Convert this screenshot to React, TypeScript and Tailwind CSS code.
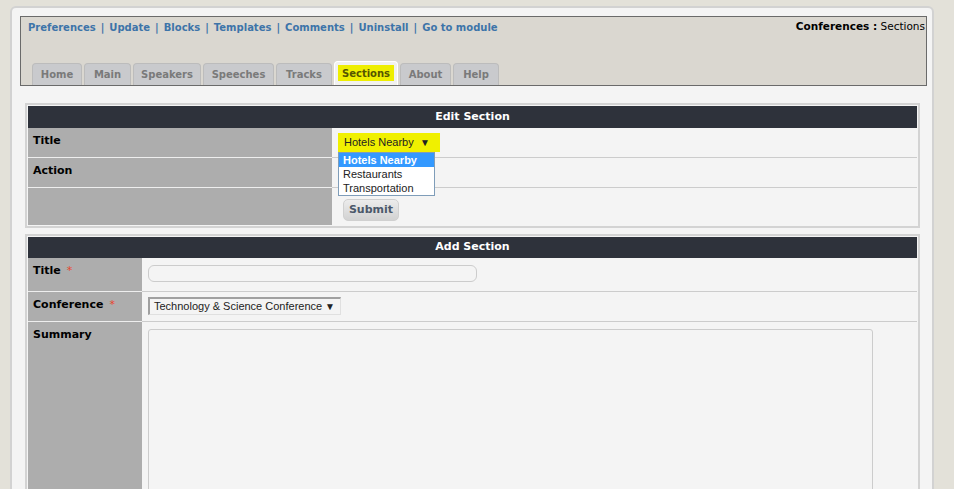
import React from 'react';

const verdana = { fontFamily: '"DejaVu Sans", Verdana, sans-serif' };
const arial = { fontFamily: '"Liberation Sans", Arial, sans-serif' };

const links = ['Preferences', 'Update', 'Blocks', 'Templates', 'Comments', 'Uninstall', 'Go to module'];

const tabs = [
  { label: 'Home', w: 'w-[50px]' },
  { label: 'Main', w: 'w-[47px]' },
  { label: 'Speakers', w: 'w-[68px]' },
  { label: 'Speeches', w: 'w-[71px]' },
  { label: 'Tracks', w: 'w-[56px]' },
  { label: 'Sections', w: 'w-[64px]', active: true },
  { label: 'About', w: 'w-[51px]' },
  { label: 'Help', w: 'w-[46px]' },
];

function Req() {
  return <span className="text-[#e8442c] font-normal ml-[6px]">*</span>;
}

export default function App() {
  return (
    <div className="h-screen bg-[#e3e1d9] pl-[10px] pt-[6px] overflow-hidden" style={verdana}>
      <div className="w-[924px] min-h-[500px] bg-[#f4f4f4] border-2 border-[#d2d2d2] rounded-t-[6px] pt-[8px] pl-[8px] pr-[5px]">
        {/* module header */}
        <div className="h-[70px] border border-[#6a6a6a] bg-[#dad7d0] flex flex-col justify-between">
          <div className="flex justify-between items-start">
            <div className="pl-[7px] pt-[4px] text-[10px] font-bold text-[#3d74a9] leading-[14px]">
              {links.map((l, i) => (
                <span key={l}>
                  {i > 0 && <span className="mx-[5px]">|</span>}
                  <a href="#" className="hover:underline">{l}</a>
                </span>
              ))}
            </div>
            <div className="pr-px pt-[2px] text-[10.5px] leading-[14px] text-black">
              <span className="font-bold">Conferences :</span> Sections
            </div>
          </div>
          <div className="flex items-end gap-[2px] pl-[11px]">
            {tabs.map((t) =>
              t.active ? (
                <div
                  key={t.label}
                  className={`${t.w} h-[24px] rounded-t-[4px] border border-b-0 border-[#ffffff] bg-[#f1f1ef] px-[3px] pt-[3px]`}
                >
                  <div className="h-[16px] bg-[#eeee00] text-[10px] font-bold text-[#555500] flex items-center justify-center">
                    {t.label}
                  </div>
                </div>
              ) : (
                <div
                  key={t.label}
                  className={`${t.w} h-[22px] rounded-t-[4px] border border-b-0 border-[#bcbcbc] bg-[#c9cacd] text-[10px] font-bold text-[#7a7a7a] flex items-center justify-center`}
                >
                  {t.label}
                </div>
              )
            )}
          </div>
        </div>

        {/* Edit Section */}
        <div className="ml-[5px] mr-[7px] mt-[17px] border-2 border-[#d3d3d3] p-px">
          <div className="h-[22px] bg-[#2e323b] text-white text-[11px] font-bold flex items-center justify-center">
            Edit Section
          </div>
          <div className="flex h-[30px]">
            <div className="w-[304px] bg-[#adadad] border-b border-[#eeeeee] pl-[5px] pt-[5px] text-[11px] font-bold text-black">Title</div>
            <div className="flex-1 border-b border-[#cccccc] pl-[6px] pt-[5px] relative">
              <div className="w-[102px] h-[19px] bg-[#f0f000] flex items-center justify-between pl-[6px] pr-[10px] text-[11px] text-[#222] whitespace-nowrap" style={arial}>
                <span>Hotels Nearby</span>
                <span className="text-[10px]">▼</span>
              </div>
              <div className="absolute left-[6px] top-[24px] w-[97px] bg-white border border-[#7f9db9] text-[11px] leading-[14px] z-10" style={arial}>
                <div className="bg-[#3399ff] text-white pl-[4px] font-bold">Hotels Nearby</div>
                <div className="pl-[4px] text-[#222]">Restaurants</div>
                <div className="pl-[4px] text-[#222]">Transportation</div>
              </div>
            </div>
          </div>
          <div className="flex h-[30px]">
            <div className="w-[304px] bg-[#adadad] border-b border-[#eeeeee] pl-[5px] pt-[5px] text-[11px] font-bold text-black">Action</div>
            <div className="flex-1 border-b border-[#cccccc]"></div>
          </div>
          <div className="flex h-[37px]">
            <div className="w-[304px] bg-[#adadad]"></div>
            <div className="flex-1 pl-[11px] pt-[8px]">
              <button className="w-[56px] h-[22px] rounded-[5px] border border-[#d0d0d0] bg-gradient-to-b from-[#ececec] to-[#d2d2d2] text-[11px] font-bold text-[#4b586a]">
                Submit
              </button>
            </div>
          </div>
        </div>

        {/* Add Section */}
        <div className="ml-[5px] mr-[7px] mt-[6px] border-2 border-[#d3d3d3] p-px">
          <div className="h-[21px] bg-[#2e323b] text-white text-[11px] font-bold flex items-center justify-center">
            Add Section
          </div>
          <div className="flex h-[34px]">
            <div className="w-[114px] bg-[#adadad] border-b border-[#eeeeee] pl-[5px] pt-[5px] text-[11px] font-bold text-black">
              Title<Req />
            </div>
            <div className="flex-1 border-b border-[#cccccc] pl-[6px] pt-[7px]">
              <input className="block w-[329px] h-[17px] rounded-[6px] border border-[#cccccc] bg-[#f4f4f4] outline-none" />
            </div>
          </div>
          <div className="flex h-[30px]">
            <div className="w-[114px] bg-[#adadad] border-b border-[#eeeeee] pl-[5px] pt-[5px] text-[11px] font-bold text-black">
              Conference<Req />
            </div>
            <div className="flex-1 border-b border-[#cccccc] pl-[6px] pt-[5px]">
              <div className="w-[193px] h-[18px] border-t-2 border-l-2 border-[#a0a0a0] border-r border-b border-r-[#e0e0e0] border-b-[#e0e0e0] bg-[#f4f4f4] flex items-center justify-between pl-[4px] pr-[5px] text-[11px] text-[#222] whitespace-nowrap" style={arial}>
                <span>Technology &amp; Science Conference</span>
                <span className="text-[10px]">▼</span>
              </div>
            </div>
          </div>
          <div className="flex h-[220px]">
            <div className="w-[114px] bg-[#adadad] pl-[5px] pt-[5px] text-[11px] font-bold text-black">Summary</div>
            <div className="flex-1 pl-[6px] pt-[7px]">
              <textarea className="block w-[725px] h-[200px] rounded-[3px] border border-[#cccccc] bg-[#f4f4f4] outline-none resize-none" />
            </div>
          </div>
        </div>
      </div>
    </div>
  );
}
